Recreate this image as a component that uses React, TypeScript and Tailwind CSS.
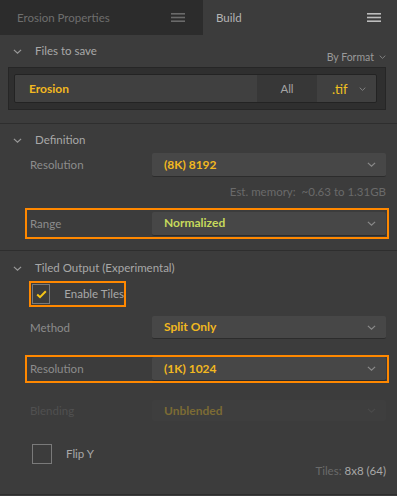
import React from "react";

const Chevron = ({ className = "", w = 9, h = 5 }: { className?: string; w?: number; h?: number }) => (
  <svg width={w} height={h} viewBox="0 0 10 6" className={className} preserveAspectRatio="none">
    <path d="M1 1 L5 5 L9 1" fill="none" stroke="currentColor" strokeWidth="1.3" />
  </svg>
);

const Burger = ({ className = "" }: { className?: string }) => (
  <svg width="14" height="9" viewBox="0 0 14 9" className={className}>
    <rect x="0" y="0" width="14" height="1.6" fill="currentColor" />
    <rect x="0" y="3.7" width="14" height="1.6" fill="currentColor" />
    <rect x="0" y="7.4" width="14" height="1.6" fill="currentColor" />
  </svg>
);

const Check = () => (
  <svg width="11" height="9" viewBox="0 0 11 9">
    <path d="M1.2 4.5 L4 7.2 L9.8 1.2" fill="none" stroke="#f5c518" strokeWidth="2" />
  </svg>
);

const SectionHeader = ({ title }: { title: string }) => (
  <div className="flex items-center h-[20px] pl-[13px]">
    <Chevron className="text-[#9a9a9a]" />
    <span className="ml-[13px] text-[#a8a8a8]">{title}</span>
  </div>
);

const Dropdown = ({
  value,
  color,
  dim = false,
  h = "h-[24px]",
}: {
  value: string;
  color: string;
  dim?: boolean;
  h?: string;
}) => (
  <div
    className={`flex items-center justify-between w-[234px] ${h} pl-[12px] pr-[10px] rounded-[2px] ${
      dim ? "bg-[#3e3e3e]" : "bg-[#474747] border-b border-[#2c2c2c]"
    }`}
  >
    <span className="font-bold text-[12px]" style={{ color }}>
      {value}
    </span>
    <Chevron className={dim ? "text-[#4a4a4a]" : "text-[#8a8a8a]"} />
  </div>
);

export default function App() {
  return (
    <div
      className="w-[397px] h-[496px] bg-[#3c3c3c] text-[11.5px] leading-[16px] overflow-hidden flex flex-col whitespace-nowrap"
      style={{ fontFamily: "Lato, 'Noto Sans', sans-serif" }}
    >
      {/* Tabs */}
      <div className="flex h-[35px] shrink-0">
        <div className="w-[203px] bg-[#2c2c2c] flex items-center justify-between pl-[17px] pr-[18px]">
          <span className="text-[#6e6e6e]">Erosion Properties</span>
          <Burger className="text-[#6a6a6a]" />
        </div>
        <div className="flex-1 flex items-center justify-between pl-[13px] pr-[16px]">
          <span className="text-[#b4b4b4]">Build</span>
          <Burger className="text-[#bdbdbd]" />
        </div>
      </div>

      {/* Files to save */}
      <div className="pt-[6px] pb-[13px] border-b border-[#2e2e2e] shrink-0">
        <div className="flex justify-between h-[26px]">
          <div className="self-start">
            <SectionHeader title="Files to save" />
          </div>
          <div className="self-end flex items-center pr-[11px] pb-[3px] text-[10.5px] leading-[14px] text-[#9a9a9a]">
            <span>By Format</span>
            <Chevron className="ml-[5px] text-[#8a8a8a]" w={7} h={4} />
          </div>
        </div>
        <div className="ml-[8px] mr-[11px] h-[43px] bg-[#2f2f2f] border border-[#262626] pl-[5px] pr-[8px] flex items-center">
          <div className="flex-1 h-[29px] bg-[#404040] border border-[#232323] rounded-[2px] flex items-stretch overflow-hidden">
            <div className="flex-1 flex items-center pl-[14px]">
              <span className="font-bold text-[12px] text-[#f2b820]">Erosion</span>
            </div>
            <div className="w-[60px] bg-[#373737] flex items-center justify-center text-[#a4a4a4]">All</div>
            <div className="w-[59px] flex items-center pl-[15px] pr-[10px] justify-between">
              <span className="text-[#f2c020] text-[13px]">.tif</span>
              <Chevron className="text-[#8a8a8a]" w={7} h={4} />
            </div>
          </div>
        </div>
      </div>

      {/* Definition */}
      <div className="pt-[6px] pb-[11px] border-b border-[#2e2e2e] shrink-0">
        <SectionHeader title="Definition" />
        <div className="flex items-center h-[24px] mt-[3px] pl-[30px]">
          <span className="w-[122px] text-[#8c8c8c]">Resolution</span>
          <Dropdown value="(8K) 8192" color="#f2b820" />
        </div>
        <div className="flex justify-end pr-[11px] mt-[7px] text-[#6a6a6a] h-[16px] items-center">
          Est. memory:&nbsp; ~0.63 to 1.31GB
        </div>
        <div className="ml-[25px] mr-[8px] mt-[8px] h-[31px] border-2 border-[#ff8800] flex items-center pl-[3px]">
          <span className="w-[122px] text-[#8c8c8c]">Range</span>
          <Dropdown value="Normalized" color="#c6d95c" />
        </div>
      </div>

      {/* Tiled output */}
      <div className="pt-[7px] flex-1 flex flex-col">
        <SectionHeader title="Tiled Output (Experimental)" />
        <div className="ml-[29px] mt-[3px] w-[97px] h-[26px] border-2 border-[#ff8800] flex items-center pl-[1px]">
          <div className="w-[20px] h-[20px] border border-[#7a7a7a] flex items-center justify-center">
            <Check />
          </div>
          <span className="ml-[14px] text-[#a8a8a8]">Enable Tiles</span>
        </div>
        <div className="flex items-center h-[23px] mt-[9px] pl-[30px]">
          <span className="w-[122px] text-[#8c8c8c]">Method</span>
          <Dropdown value="Split Only" color="#f2b820" h="h-[23px]" />
        </div>
        <div className="ml-[25px] mr-[8px] mt-[16px] h-[28px] border-2 border-[#ff8800] flex items-center pl-[3px]">
          <span className="w-[122px] text-[#8c8c8c]">Resolution</span>
          <Dropdown value="(1K) 1024" color="#f2b820" />
        </div>
        <div className="flex items-center h-[21px] mt-[17px] pl-[30px]">
          <span className="w-[122px] text-[#505050]">Blending</span>
          <Dropdown value="Unblended" color="#7c6b34" dim h="h-[21px]" />
        </div>
        <div className="flex items-center h-[20px] mt-[23px] pl-[32px]">
          <div className="w-[20px] h-[20px] border border-[#7a7a7a]" />
          <span className="ml-[14px] text-[#a8a8a8]">Flip Y</span>
        </div>
        <div className="flex justify-end pr-[11px] -mt-[1px] h-[16px] items-center">
          <span className="text-[#6a6a6a]">Tiles:&nbsp;</span>
          <span className="text-[#a8a8a8]">8x8 (64)</span>
        </div>
      </div>
      <div className="h-[1px] bg-[#2e2e2e] shrink-0 mb-[1px]" />
    </div>
  );
}
